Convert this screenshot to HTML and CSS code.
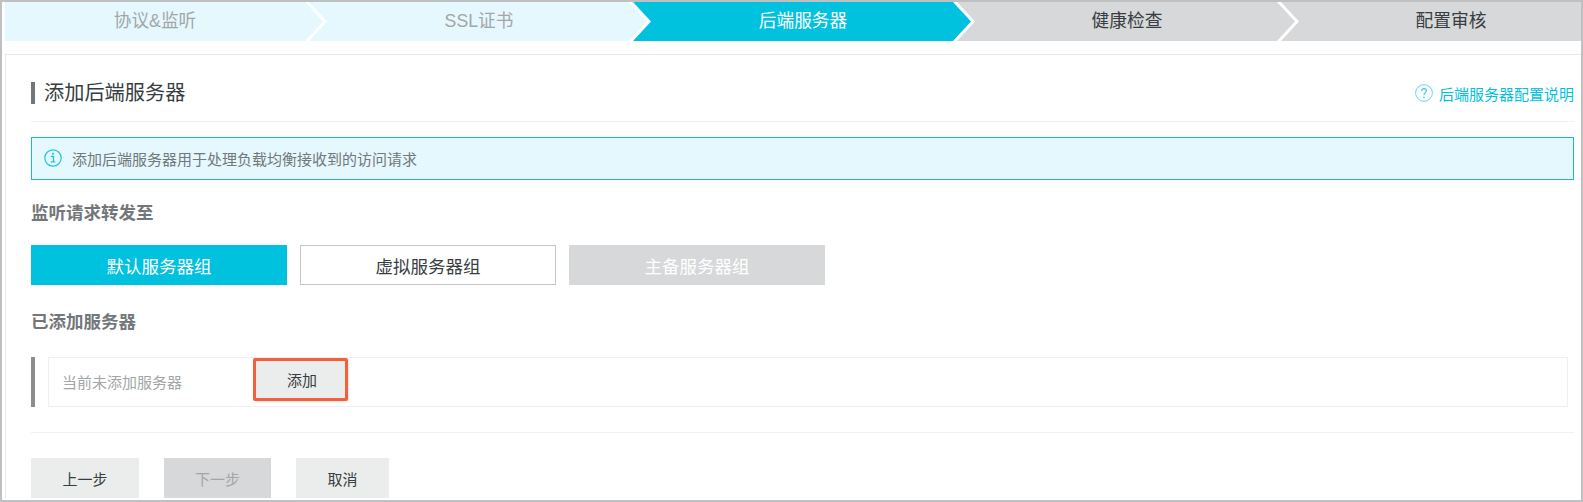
FILE: index.html
```html
<!DOCTYPE html>
<html lang="zh-CN">

<head>
  <meta charset="UTF-8">
  <title>添加后端服务器</title>
  <link rel="stylesheet" href="styles.css">
</head>

<body>
  <div class="frame">
    <div class="steps">
      <div class="step step-done step-first">协议&amp;监听</div>
      <div class="step step-done">SSL证书</div>
      <div class="step step-active">后端服务器</div>
      <div class="step">健康检查</div>
      <div class="step">配置审核</div>
    </div>

    <div class="panel">
      <div class="title-row">
        <h2 class="title">添加后端服务器</h2>
        <a class="help-link" href="#">
          <svg class="help-icon" viewBox="0 0 18 18" width="18" height="18">
            <circle cx="9" cy="9" r="8.4" fill="none" stroke="#7fdcec" stroke-width="1.1" />
            <path d="M6.6 7c0-1.5 1-2.4 2.4-2.4s2.4.9 2.4 2.2c0 1-.5 1.5-1.3 2.1-.8.6-1.1 1-1.1 1.9v.4" fill="none" stroke="#33c8e2" stroke-width="1.1" />
            <rect x="8.3" y="12.6" width="1.3" height="1.4" fill="#33c8e2" />
          </svg>
          后端服务器配置说明
        </a>
      </div>

      <div class="notice">
        <svg class="notice-icon" viewBox="0 0 18 18" width="18" height="18">
          <circle cx="9" cy="9" r="8.2" fill="none" stroke="#1fc4e0" stroke-width="1.2" />
          <rect x="8.1" y="3.8" width="1.8" height="1.9" fill="#1fc4e0" />
          <path d="M6.9 7.5h2.6v5.3h1.6M6.7 12.9h4.6" fill="none" stroke="#1fc4e0" stroke-width="1.3" />
        </svg>
        添加后端服务器用于处理负载均衡接收到的访问请求
      </div>

      <h3 class="section-title section-forward">监听请求转发至</h3>
      <div class="tabs">
        <button class="tab tab-on" type="button">默认服务器组</button>
        <button class="tab" type="button">虚拟服务器组</button>
        <button class="tab tab-off" type="button">主备服务器组</button>
      </div>

      <h3 class="section-title section-added">已添加服务器</h3>
      <div class="server-row">
        <div class="server-box">
          <span class="server-empty">当前未添加服务器</span>
          <button class="add-btn" type="button">添加</button>
        </div>
      </div>

      <div class="footer">
        <button class="btn btn-prev" type="button">上一步</button>
        <button class="btn btn-next" type="button">下一步</button>
        <button class="btn btn-cancel" type="button">取消</button>
      </div>
    </div>
  </div>
</body>

</html>
```

FILE: styles.css
```css
* {
  box-sizing: border-box;
}

body {
  margin: 0;
  background-color: #fff;
  font-family: "Liberation Sans", "Noto Sans CJK SC", sans-serif;
  color: #373d41;
}

.frame {
  width: 1583px;
  height: 502px;
  border: 2px solid #bfc0c1;
  overflow: hidden;
  background-color: #fff;
}

/* step bar */
.steps {
  display: flex;
  height: 39px;
  margin-left: 3px;
  overflow: hidden;
}

.step {
  flex: 0 0 338px;
  margin-left: -14px;
  padding-left: 2px;
  height: 39px;
  line-height: 38px;
  text-align: center;
  font-size: 17.7px;
  background-color: #d7d8d9;
  color: #373d41;
  clip-path: polygon(0 0, 320px 0, 100% 50%, 320px 100%, 0 100%, 18px 50%);
}

.step-first {
  margin-left: -20px;
}

.step-done {
  background-color: #e4f8fe;
  color: #a3a6a8;
}

.step-active {
  background-color: #00c1de;
  color: #fff;
}

/* main panel */
.panel {
  margin: 13px 0 0 3px;
  padding: 0 7px 0 25px;
  border-top: 1px solid #e8e8e8;
  border-left: 1px solid #e8e8e8;
}

.title-row {
  display: flex;
  justify-content: space-between;
  align-items: center;
  height: 67px;
  padding-top: 10px;
  border-bottom: 1px solid #f0f0f0;
}

.title {
  margin: 0;
  padding-left: 9px;
  border-left: 4px solid #73777a;
  height: 22px;
  line-height: 23px;
  font-size: 20.2px;
  font-weight: normal;
}

.help-link {
  display: flex;
  align-items: center;
  gap: 6px;
  font-size: 15px;
  color: #00c1de;
  text-decoration: none;
}

.notice {
  display: flex;
  align-items: center;
  gap: 10px;
  height: 43px;
  margin-top: 15px;
  padding-left: 12px;
  padding-bottom: 1px;
  border: 1px solid #1ab8d6;
  background-color: #e4f8fe;
  font-size: 15px;
  color: #73777a;
}

.section-title {
  margin: 0;
  font-size: 17.5px;
  font-weight: bold;
  line-height: 24px;
  color: #73777a;
}

.section-forward {
  margin-top: 21px;
}

.section-added {
  margin-top: 25px;
}

.tabs {
  display: flex;
  gap: 13px;
  margin-top: 20px;
}

.tab {
  width: 256px;
  height: 40px;
  padding: 0;
  border: 1px solid #c4c6c7;
  background-color: #fff;
  font: inherit;
  font-size: 17.5px;
  color: #373d41;
}

.tab-on {
  border-color: #00c1de;
  background-color: #00c1de;
  color: #fff;
}

.tab-off {
  border-color: #d7d8d9;
  background-color: #d7d8d9;
  color: #fff;
}

/* server list */
.server-row {
  height: 50px;
  margin-top: 23px;
  padding-left: 13px;
  padding-right: 6px;
  border-left: 4px solid #8a8c8e;
}

.server-box {
  display: flex;
  align-items: center;
  height: 50px;
  padding-left: 13px;
  border: 1px solid #f0f0f0;
}

.server-empty {
  width: 191px;
  margin-bottom: 2px;
  font-size: 15px;
  color: #a3a6a8;
}

.add-btn {
  width: 95px;
  height: 43px;
  margin-top: -5px;
  padding: 0 0 0 3px;
  border: 3px solid #f4603c;
  border-radius: 2px;
  box-shadow: 1px 1px 2px rgba(0, 0, 0, 0.1);
  background-color: #ebecec;
  font: inherit;
  font-size: 15px;
  color: #373d41;
}

/* footer buttons */
.footer {
  display: flex;
  margin-top: 25px;
  padding-top: 25px;
  border-top: 1px solid #f0f0f0;
}

.btn {
  height: 40px;
  padding: 0;
  border: none;
  background-color: #ebecec;
  font: inherit;
  font-size: 15px;
  color: #373d41;
}

.btn-prev {
  width: 108px;
}

.btn-next {
  width: 107px;
  margin-left: 25px;
  background-color: #d7d8d9;
  color: #a3a6a8;
}

.btn-cancel {
  width: 93px;
  margin-left: 25px;
}
```
